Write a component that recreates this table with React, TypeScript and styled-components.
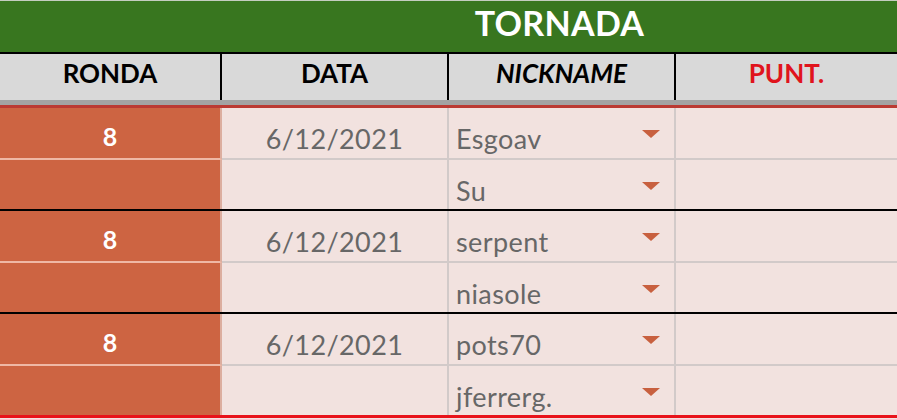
import React from "react";
import styled, { createGlobalStyle } from "styled-components";

const Global = createGlobalStyle`
  html, body { margin: 0; padding: 0; background: #f2e2df; }
  body { font-family: Lato, "Open Sans", sans-serif; overflow: hidden; }
`;

const COLS = "222px 227px 227px 1fr";

const Sheet = styled.div`
  width: 897px;
  height: 419px;
  overflow: hidden;
  background: #f2e2df;
`;

const TitleBar = styled.div`
  display: grid;
  grid-template-columns: ${COLS};
  height: 51px;
  border-top: 1px solid #c4cdbf;
  background: #38761f;
`;

const Title = styled.div`
  grid-column: 2 / 5;
  display: flex;
  justify-content: center;
  align-items: flex-start;
  padding-top: 2px;
  color: #ffffff;
  font-weight: 700;
  font-size: 34px;
  line-height: 40px;
  letter-spacing: 0.3px;
`;

const HeaderRow = styled.div`
  display: grid;
  grid-template-columns: ${COLS};
  height: 46px;
  border-top: 2px solid #000;
  background: #d9d9d9;
`;

const HeadCell = styled.div<{ $italic?: boolean; $red?: boolean; $last?: boolean }>`
  display: flex;
  justify-content: center;
  align-items: flex-start;
  padding-top: 3px;
  font-size: 26px;
  line-height: 32px;
  font-weight: 700;
  font-style: ${(p) => (p.$italic ? "italic" : "normal")};
  color: ${(p) => (p.$red ? "#e0141c" : "#000")};
  border-right: ${(p) => (p.$last ? "none" : "2px solid #000")};
`;

const GreyBar = styled.div`
  height: 5px;
  background: #a3a3a3;
  border-bottom: 3px solid #bb3a33;
`;

const Group = styled.div<{ $last?: boolean }>`
  border-bottom: ${(p) => (p.$last ? "3px solid #e8121a" : "2px solid #000")};
`;

const Row = styled.div<{ $h: number }>`
  display: grid;
  grid-template-columns: ${COLS};
  height: ${(p) => p.$h}px;
`;

const RoundCell = styled.div<{ $sep?: boolean }>`
  background: #cd6442;
  border-right: 2px solid #dcae9f;
  border-bottom: ${(p) => (p.$sep ? "2px solid #efb8a5" : "none")};
  display: flex;
  justify-content: center;
  align-items: flex-start;
  padding-top: 13px;
  color: #fff;
  font-weight: 700;
  font-size: 25px;
  line-height: 30px;
`;

const Cell = styled.div<{ $sep?: boolean; $center?: boolean; $last?: boolean }>`
  position: relative;
  border-right: ${(p) => (p.$last ? "none" : "2px solid #d2cac9")};
  border-bottom: ${(p) => (p.$sep ? "2px solid #d2cac9" : "none")};
  display: flex;
  justify-content: ${(p) => (p.$center ? "center" : "flex-start")};
  align-items: flex-start;
  padding-top: 15px;
  padding-left: ${(p) => (p.$center ? "0" : "7px")};
  color: #676767;
  font-size: 27px;
  line-height: 32px;
  letter-spacing: 0.4px;
`;

const Arrow = styled.span`
  position: absolute;
  right: 14px;
  top: 22px;
  width: 0;
  height: 0;
  border-left: 9px solid transparent;
  border-right: 9px solid transparent;
  border-top: 8px solid #c8603f;
`;

type Pair = { round: string; date: string; a: string; b: string };

const data: Pair[] = [
  { round: "8", date: "6/12/2021", a: "Esgoav", b: "Su" },
  { round: "8", date: "6/12/2021", a: "serpent", b: "niasole" },
  { round: "8", date: "6/12/2021", a: "pots70", b: "jferrerg." },
];

export default function App() {
  return (
    <Sheet>
      <Global />
      <TitleBar>
        <Title>TORNADA</Title>
      </TitleBar>
      <HeaderRow>
        <HeadCell>RONDA</HeadCell>
        <HeadCell>DATA</HeadCell>
        <HeadCell $italic>NICKNAME</HeadCell>
        <HeadCell $red $last>PUNT.</HeadCell>
      </HeaderRow>
      <GreyBar />
      {data.map((g, i) => (
        <Group key={i} $last={i === data.length - 1}>
          <Row $h={52}>
            <RoundCell $sep>{g.round}</RoundCell>
            <Cell $sep $center>{g.date}</Cell>
            <Cell $sep>
              {g.a}
              <Arrow />
            </Cell>
            <Cell $sep $last />
          </Row>
          <Row $h={49}>
            <RoundCell />
            <Cell $center />
            <Cell>
              {g.b}
              <Arrow />
            </Cell>
            <Cell $last />
          </Row>
        </Group>
      ))}
    </Sheet>
  );
}
